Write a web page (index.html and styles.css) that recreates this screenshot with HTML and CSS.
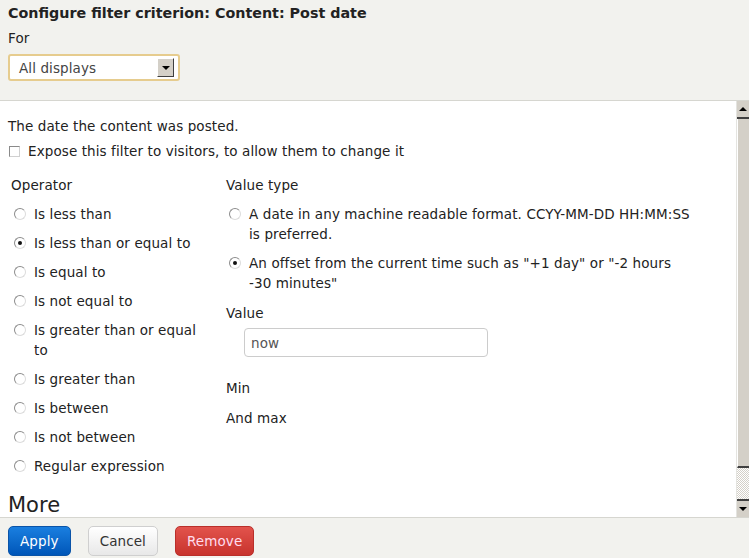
FILE: index.html
```html
<!DOCTYPE html>
<html lang="en">
<head>
    <meta charset="UTF-8">
    <title>Configure filter criterion: Content: Post date</title>
    <link rel="stylesheet" href="styles.css">
</head>
<body>
    <div class="dialog">
        <div class="dialog-header">
            <h1>Configure filter criterion: Content: Post date</h1>
            <label class="for-label">For</label>
            <div class="select">
                <span class="select-text">All displays</span>
                <span class="select-btn"><span class="tri-down"></span></span>
            </div>
        </div>

        <div class="dialog-body">
            <div class="scroll-content">
                <p class="description">The date the content was posted.</p>
                <label class="check-row">
                    <input type="checkbox" class="check">
                    <span>Expose this filter to visitors, to allow them to change it</span>
                </label>

                <div class="columns">
                    <div class="col-operator">
                        <div class="field-title">Operator</div>
                        <label class="radio-row"><input type="radio" name="op"><span>Is less than</span></label>
                        <label class="radio-row"><input type="radio" name="op" checked><span>Is less than or equal to</span></label>
                        <label class="radio-row"><input type="radio" name="op"><span>Is equal to</span></label>
                        <label class="radio-row"><input type="radio" name="op"><span>Is not equal to</span></label>
                        <label class="radio-row"><input type="radio" name="op"><span>Is greater than or equal to</span></label>
                        <label class="radio-row"><input type="radio" name="op"><span>Is greater than</span></label>
                        <label class="radio-row"><input type="radio" name="op"><span>Is between</span></label>
                        <label class="radio-row"><input type="radio" name="op"><span>Is not between</span></label>
                        <label class="radio-row"><input type="radio" name="op"><span>Regular expression</span></label>
                    </div>
                    <div class="col-value">
                        <div class="field-title">Value type</div>
                        <label class="radio-row"><input type="radio" name="type"><span>A date in any machine readable format. CCYY-MM-DD HH:MM:SS<br>is preferred.</span></label>
                        <label class="radio-row"><input type="radio" name="type" checked><span>An offset from the current time such as "+1 day" or "-2 hours<br>-30 minutes"</span></label>
                        <div class="field-title value-title">Value</div>
                        <input type="text" class="text-input" value="now">
                        <div class="field-title min-title">Min</div>
                        <div class="field-title max-title">And max</div>
                    </div>
                </div>

                <h2 class="more">More</h2>
            </div>

            <div class="scrollbar">
                <div class="sb-btn sb-up"><span class="tri-up"></span></div>
                <div class="sb-thumb"></div>
                <div class="sb-track"></div>
                <div class="sb-btn sb-down"><span class="tri-down"></span></div>
            </div>
        </div>

        <div class="dialog-footer">
            <button class="btn btn-apply">Apply</button>
            <button class="btn btn-cancel">Cancel</button>
            <button class="btn btn-remove">Remove</button>
        </div>
    </div>
</body>
</html>
```

FILE: styles.css
```css
html, body {
    margin: 0;
    padding: 0;
}
body {
    font-family: "DejaVu Sans", Verdana, sans-serif;
    font-size: 13.5px;
    letter-spacing: 0.1px;
    color: #222;
    background: #f2f2ee;
}
.dialog {
    width: 749px;
    height: 558px;
    display: flex;
    flex-direction: column;
    overflow: hidden;
}

/* header */
.dialog-header {
    height: 97px;
    padding: 3px 8px 0;
    border-bottom: 1px solid #d6d6d0;
    background: #f2f2ee;
}
h1 {
    margin: 0;
    font-size: 14.3px;
    letter-spacing: 0;
    line-height: 20px;
    font-weight: bold;
    color: #222;
}
.for-label {
    display: block;
    margin-top: 6px;
    line-height: 18px;
}
.select {
    display: flex;
    align-items: center;
    justify-content: space-between;
    box-sizing: border-box;
    width: 172px;
    height: 27px;
    margin-top: 7px;
    padding: 0 4px 0 9px;
    background: #fff;
    border: 2px solid #e6cc8e;
    border-radius: 3px;
    color: #444;
}
.select-btn {
    display: flex;
    align-items: center;
    justify-content: center;
    width: 17px;
    height: 19px;
    box-sizing: border-box;
    background: #d4d0c8;
    border: 1px solid;
    border-color: #fff #404040 #404040 #fff;
}
.tri-down {
    width: 0;
    height: 0;
    border-left: 4px solid transparent;
    border-right: 4px solid transparent;
    border-top: 4px solid #000;
}
.tri-up {
    width: 0;
    height: 0;
    border-left: 4px solid transparent;
    border-right: 4px solid transparent;
    border-bottom: 4px solid #000;
}

/* body */
.dialog-body {
    display: flex;
    height: 416px;
    background: #fff;
}
.scroll-content {
    flex: 1;
    overflow: hidden;
    padding: 16px 0 0 8px;
}
.description {
    margin: 0;
    line-height: 18px;
}
.check-row {
    display: flex;
    align-items: center;
    margin-top: 7px;
    line-height: 18px;
}
.check {
    appearance: none;
    width: 11px;
    height: 11px;
    margin: 0 8px 0 1px;
    box-sizing: border-box;
    border: 1px solid #8a8a8a;
    border-right-color: #d0d0d0;
    border-bottom-color: #d0d0d0;
    background: #fff;
}

.columns {
    display: flex;
    margin-top: 15px;
}
.col-operator {
    width: 200px;
    padding-left: 3px;
    flex-shrink: 0;
}
.col-value {
    width: 480px;
    padding-left: 15px;
}
.field-title {
    line-height: 20px;
    margin-bottom: 9px;
}
.radio-row {
    display: flex;
    align-items: flex-start;
    line-height: 20px;
    margin-bottom: 9px;
}
.radio-row input {
    appearance: none;
    flex-shrink: 0;
    width: 12px;
    height: 12px;
    margin: 4px 8px 0 3px;
    box-sizing: border-box;
    border-radius: 50%;
    border: 1px solid #8c8c8c;
    border-right-color: #dcdcdc;
    border-bottom-color: #dcdcdc;
    background: #fff;
    position: relative;
}
.radio-row input:checked::after {
    content: "";
    position: absolute;
    left: 3px;
    top: 3px;
    width: 4px;
    height: 4px;
    border-radius: 50%;
    background: #111;
}
.value-title {
    margin-top: 10px;
    margin-bottom: 5px;
}
.text-input {
    display: block;
    box-sizing: border-box;
    width: 244px;
    height: 29px;
    margin-left: 18px;
    padding: 0 6px;
    border: 1px solid #ccc;
    border-radius: 4px;
    font-family: inherit;
    font-size: 13.5px;
    letter-spacing: 0.1px;
    color: #555;
}
.min-title {
    margin-top: 21px;
    margin-bottom: 10px;
}
.more {
    margin: 7px 0 0;
    font-size: 21px;
    line-height: 26px;
    letter-spacing: 0;
    font-weight: normal;
    color: #222;
}

/* fake scrollbar */
.scrollbar {
    width: 12px;
    display: flex;
    flex-direction: column;
    border-left: 1px solid #e4e4e0;
}
.sb-btn {
    height: 16px;
    display: flex;
    align-items: center;
    justify-content: center;
    background: #d4d0c8;
}
.sb-up {
    border-bottom: 2px solid #404040;
}
.sb-down {
    border-top: 2px solid #404040;
}
.sb-thumb {
    height: 347px;
    background: #d4d0c8;
    border-left: 1px solid #fff;
    border-bottom: 2px solid #404040;
}
.sb-track {
    flex: 1;
    background-color: #fff;
    background-image: repeating-conic-gradient(#d4d0c8 0 25%, #fff 0 50%);
    background-size: 2px 2px;
}

/* footer */
.dialog-footer {
    flex: 1;
    display: flex;
    gap: 17px;
    padding: 8px 8px 0;
    border-top: 1px solid #d6d6d0;
    background: #f2f2ee;
}
.btn {
    height: 30px;
    padding: 0 11px;
    border-radius: 5px;
    font-family: inherit;
    font-size: 13.5px;
    letter-spacing: 0.1px;
    cursor: pointer;
}
.btn-apply {
    background: linear-gradient(#1a7fe0, #0056b8);
    border: 1px solid #0a54a8;
    color: #fff;
}
.btn-cancel {
    background: linear-gradient(#fff, #e8e8e8);
    border: 1px solid #cfcfcf;
    color: #333;
}
.btn-remove {
    background: linear-gradient(#e2534c, #c8332d);
    border: 1px solid #b92f2a;
    color: #fde;
}
```
